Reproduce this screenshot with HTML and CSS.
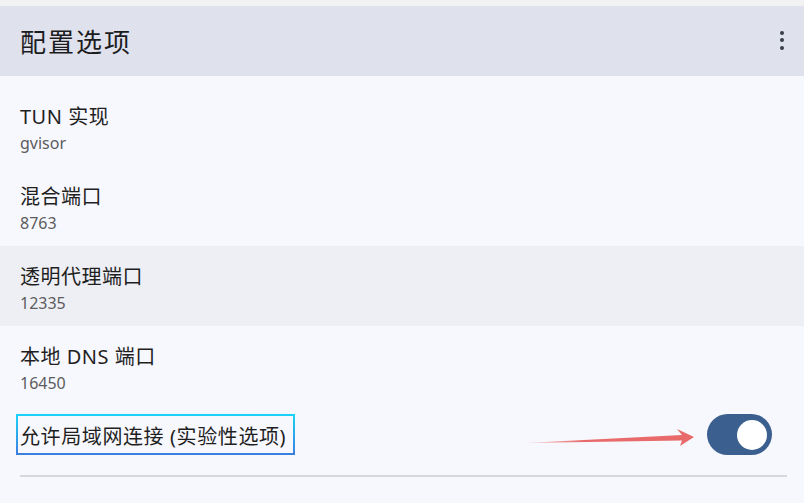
FILE: index.html
```html
<!DOCTYPE html>
<html lang="zh-CN">
<head>
<meta charset="utf-8">
<link rel="stylesheet" href="styles.css">
</head>
<body>
<div class="topstrip"></div>
<header class="appbar">
  <h1 class="title">配置选项</h1>
  <div class="kebab"><span></span><span></span><span></span></div>
</header>
<main class="list">
  <div class="item"><div class="item-title">TUN 实现</div><div class="item-sub">gvisor</div></div>
  <div class="item"><div class="item-title">混合端口</div><div class="item-sub">8763</div></div>
  <div class="item item-hover"><div class="item-title">透明代理端口</div><div class="item-sub">12335</div></div>
  <div class="item"><div class="item-title">本地 DNS 端口</div><div class="item-sub">16450</div></div>
  <div class="switch-row">
    <div class="switch-label">允许局域网连接 (实验性选项)</div>
    <div class="toggle"><div class="knob"></div></div>
  </div>
  <div class="divider"></div>
</main>
<svg class="arrow" width="180" height="26" viewBox="0 0 180 26">
  <defs>
    <linearGradient id="ag" x1="0" x2="1" y1="0" y2="0">
      <stop offset="0" stop-color="#e86a6a" stop-opacity="0.3"/>
      <stop offset="0.35" stop-color="#e86a6a"/>
      <stop offset="1" stop-color="#e86a6a"/>
    </linearGradient>
  </defs>
  <polygon points="5,18 162,10 157,4 174,12 160,21 162,15.5" fill="url(#ag)"/>
</svg>
</body>
</html>
```
FILE: styles.css
```css
html, body {
  margin: 0;
  padding: 0;
}
body {
  width: 804px;
  height: 503px;
  overflow: hidden;
  background: #f7f8fd;
  font-family: "Noto Sans", "Noto Sans CJK SC", sans-serif;
  color: #1f1f1f;
  position: relative;
}
.topstrip {
  height: 6px;
  background: #f2f2f3;
}
.appbar {
  height: 70px;
  background: #dfe1ec;
  display: flex;
  align-items: center;
  justify-content: space-between;
  padding: 0 18px 0 20px;
}
.title {
  margin: 0;
  font-family: "Noto Sans CJK SC", sans-serif;
  font-weight: 400;
  font-size: 26px;
  line-height: 36px;
  color: #1c1c1e;
  letter-spacing: 2px;
}
.kebab {
  display: flex;
  flex-direction: column;
  align-items: center;
  gap: 3.5px;
  width: 8px;
  margin-top: -2px;
}
.kebab span {
  width: 4px;
  height: 4px;
  border-radius: 50%;
  background: #3a3e4c;
}
.list {
  padding-top: 10px;
}
.item {
  height: 80px;
  box-sizing: border-box;
  padding: 17px 20px 0 20px;
}
.item-hover {
  background: #eeeff4;
}
.item-title {
  font-size: 20px;
  line-height: 28px;
  color: #1f1f1f;
  letter-spacing: 0.5px;
}
.item-sub {
  margin-top: 0;
  font-size: 16px;
  line-height: 24px;
  color: #5c5c5e;
}
.switch-row {
  display: flex;
  align-items: center;
  justify-content: space-between;
  padding: 8px 32px 0 16px;
}
.switch-label {
  height: 41px;
  box-sizing: border-box;
  display: flex;
  align-items: center;
  padding: 1px 4px 0 2px;
  border: 2px solid;
  border-image: linear-gradient(#19d3f7, #3b7fe0) 1;
  font-size: 20px;
  letter-spacing: 0.6px;
  color: #1f1f1f;
  width: 279px;
  white-space: nowrap;
}
.toggle {
  width: 65px;
  height: 41px;
  border-radius: 21px;
  background: #3b5f8f;
  display: flex;
  align-items: center;
  justify-content: flex-end;
  padding-right: 5px;
  box-sizing: border-box;
}
.knob {
  width: 30px;
  height: 30px;
  border-radius: 50%;
  background: #ffffff;
}
.divider {
  height: 2px;
  background: #d7d8dd;
  margin: 20px 17px 0 20px;
}
.arrow {
  position: absolute;
  left: 520px;
  top: 425px;
}
```
